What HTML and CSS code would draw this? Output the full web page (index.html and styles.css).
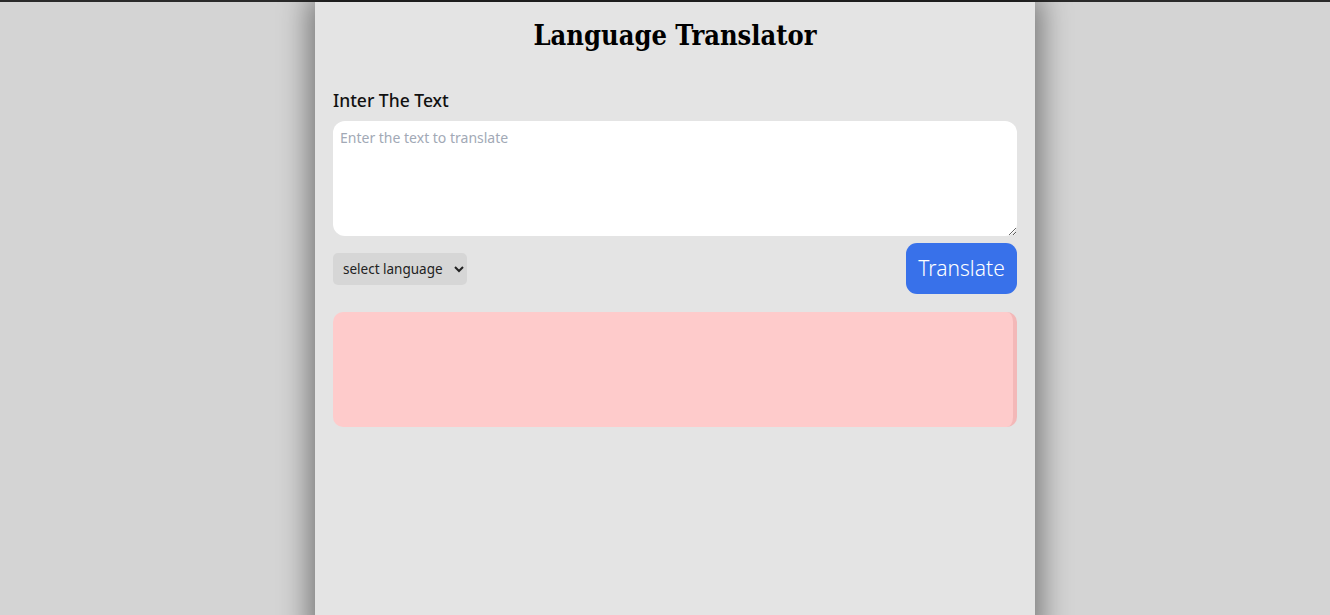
FILE: index.html
```html
<!DOCTYPE html>
<html lang="en">
<head>
<meta charset="utf-8">
<title>Language Translator</title>
<link rel="stylesheet" href="styles.css">
</head>
<body>
<div class="topline"></div>
<main class="container">
  <h1 class="title">Language Translator</h1>
  <label class="label" for="src">Inter The Text</label>
  <textarea id="src" class="input" placeholder="Enter the text to translate"></textarea>
  <div class="controls">
    <select class="lang">
      <option>select language</option>
    </select>
    <button class="btn">Translate</button>
  </div>
  <div class="output"></div>
</main>
</body>
</html>
```
FILE: styles.css
```css
html, body {
  margin: 0;
  padding: 0;
  height: 100%;
}
body {
  background: #d4d4d4;
  font-family: "Noto Sans", "Open Sans", sans-serif;
  overflow: hidden;
  padding-left: 20px;
  box-sizing: border-box;
}
.topline {
  height: 2px;
  background: #2a2a2a;
  margin-left: -20px;
}
.container {
  width: 684px;
  margin: 0 auto;
  min-height: 100vh;
  background: #e4e4e4;
  padding: 18px 18px 0;
  box-shadow: 0 0 28px 6px rgba(0,0,0,0.45);
  box-sizing: content-box;
}
.title {
  margin: 0;
  text-align: center;
  font-family: "DejaVu Serif Condensed", "DejaVu Serif", serif;
  font-weight: bold;
  font-size: 27px;
  line-height: 32px;
  color: #000;
}
.label {
  display: block;
  margin-top: 36px;
  font-size: 17.5px;
  line-height: 24px;
  font-weight: 500;
  color: #111;
}
.input {
  display: block;
  margin-top: 9px;
  width: 684px;
  height: 115px;
  box-sizing: border-box;
  border: none;
  border-radius: 12px;
  background: #fff;
  padding: 7px 7px;
  font-family: "Noto Sans", "Open Sans", sans-serif;
  font-size: 14px;
  outline: none;
  resize: vertical;
}
.input::placeholder {
  color: #a2a9b6;
}
.controls {
  display: flex;
  justify-content: space-between;
  align-items: center;
  margin-top: 7px;
}
.lang {
  width: 134px;
  height: 32px;
  border: none;
  border-radius: 5px;
  background: #d6d6d6;
  font-family: "Noto Sans", "Open Sans", sans-serif;
  font-size: 13.5px;
  color: #222;
  padding: 0 4px 0 6px;
}
.btn {
  width: 111px;
  height: 51px;
  border: none;
  border-radius: 11px;
  background: #3871ea;
  color: #fff;
  font-family: "Noto Sans", "Open Sans", sans-serif;
  font-size: 21px;
  font-weight: 300;
  padding: 0 0 2px;
}
.output {
  margin-top: 18px;
  height: 115px;
  border-radius: 10px;
  background: #fecbcb;
  border-right: 4px solid #f3b8b8;
}
```
